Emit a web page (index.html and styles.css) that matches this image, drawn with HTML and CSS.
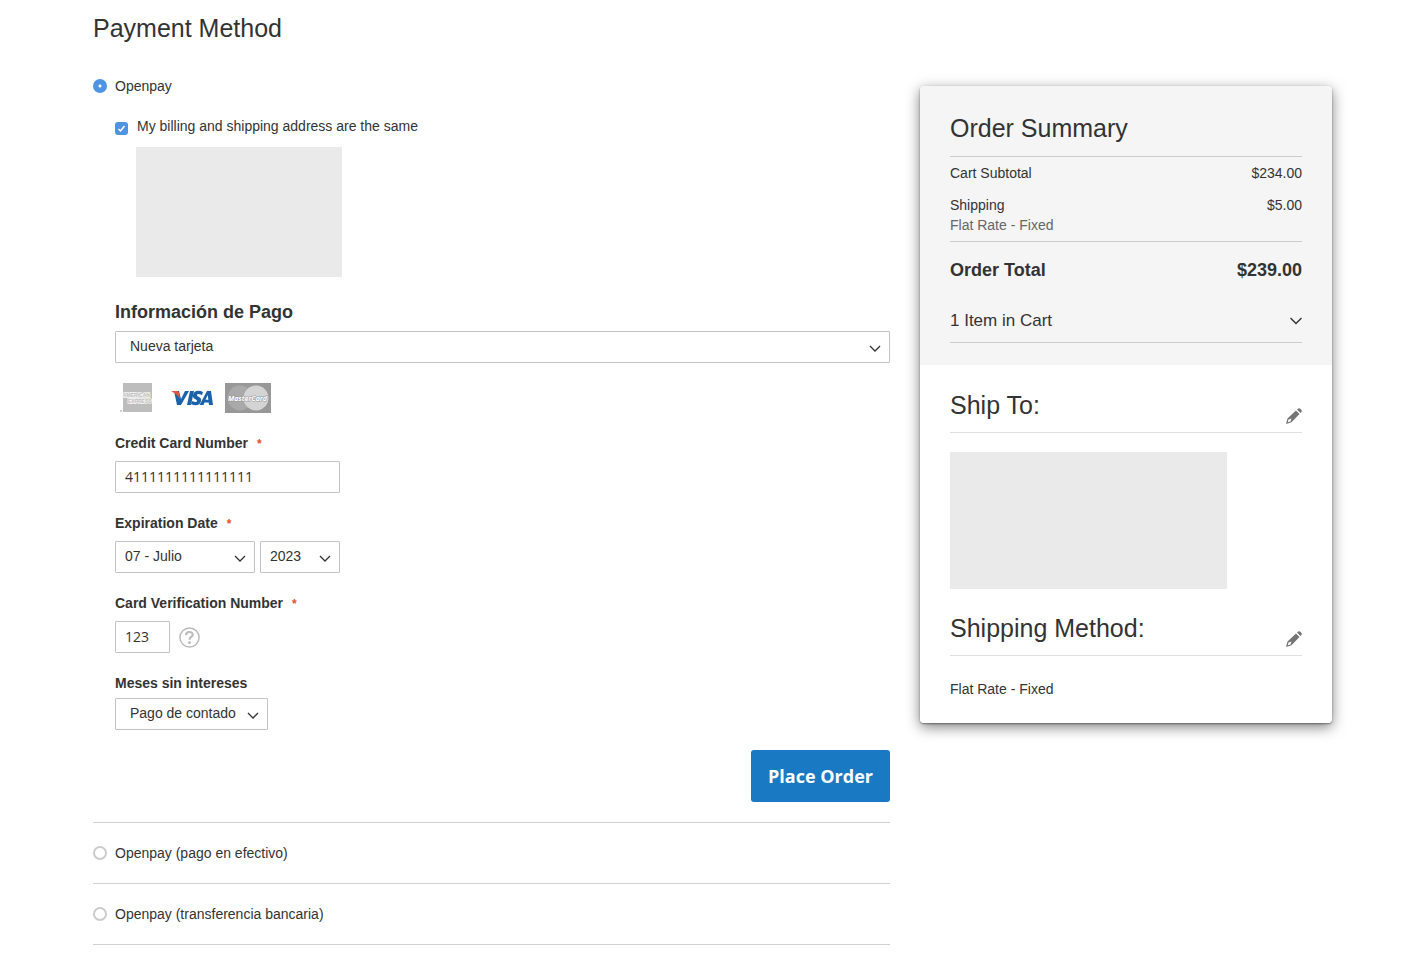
FILE: index.html
```html
<!DOCTYPE html>
<html lang="es">
<head>
<meta charset="utf-8">
<meta name="viewport" content="width=device-width, initial-scale=1">
<title>Payment Method</title>
<link rel="stylesheet" href="styles.css">
</head>
<body>
<div class="checkout">
  <main class="payment">
    <h1 class="title">Payment Method</h1>
    <form class="methods">
      <section class="method method-active">
        <label class="option"><input class="radio" type="radio" name="method" checked>Openpay</label>
        <div class="details">
          <label class="same-address"><input class="checkbox" type="checkbox" checked>My billing and shipping address are the same</label>
          <div class="billing-address"></div>
          <h2 class="legend"><label for="card">Información de Pago</label></h2>
          <select class="control select select-card" id="card"><option>Nueva tarjeta</option></select>
          <div class="brands">
            <svg class="brand" width="34" height="30" viewBox="0 0 34 30" role="img" aria-label="American Express">
              <rect x="4" width="29" height="29" fill="#bdbdbd"/>
              <rect x="1" y="27" width="2" height="2" fill="#d0d0d0"/>
              <g font-family="Liberation Sans" font-weight="700" font-size="5" fill="#bdbdbd" stroke="#f4f4f4" stroke-width="1.500" paint-order="stroke">
                <text x="4" y="14">AMERICAN</text><text x="9" y="20">EXPRESS</text>
              </g>
            </svg>
            <svg class="brand" width="42" height="16" viewBox="0 0 42 16" role="img" aria-label="Visa">
              <path d="M3 1H8L10 9 14 1H18L10 15H6Z" fill="#1a62a9"/>
              <path d="M0 1H6Q8 1 8 4L9 9Q6 4 0 1Z" fill="#e6553a"/>
              <path d="M19 1H23L20 15H16Z" fill="#1a62a9"/>
              <path d="M32 2L31 5Q26 3 26 5C26 7 31 7 30 11C29 16 24 16 20 14L21 11Q26 13 26 11C26 9 21 9 22 5C23 0 28 0 32 2Z" fill="#1a62a9"/>
              <path d="M36 1H40L42 15H38L37.700 12.500H33.500L32.500 15H28.500ZM36.700 5L34.500 9.700H37.400Z" fill="#1a62a9" fill-rule="evenodd"/>
            </svg>
            <svg class="brand" width="46" height="30" viewBox="0 0 46 30" role="img" aria-label="MasterCard">
              <rect width="46" height="30" fill="#989898"/>
              <circle cx="15" cy="15" r="12.500" fill="#a9a9a9"/>
              <circle cx="31" cy="15" r="12.500" fill="#d4d4d4"/>
              <text x="3" y="18" font-family="Open Sans" font-weight="700" font-style="italic" font-size="7" fill="#fff" stroke="#999" stroke-width="1" paint-order="stroke">MasterCard</text>
            </svg>
          </div>
          <div class="field">
            <label class="label required" for="number">Credit Card Number</label>
            <input class="control text-number" id="number" type="text" value="4111111111111111">
          </div>
          <div class="field">
            <label class="label required" for="month">Expiration Date</label>
            <div class="row">
              <select class="control select select-month" id="month"><option>07 - Julio</option></select>
              <select class="control select select-year" aria-label="Year"><option>2023</option></select>
            </div>
          </div>
          <div class="field">
            <label class="label required" for="cvv">Card Verification Number</label>
            <div class="row row-cvv">
              <input class="control text-cvv" id="cvv" type="text" value="123">
              <button class="icon-button" type="button" aria-label="Help">
                <svg width="21" height="21" viewBox="0 0 22 22" fill="none" stroke="#bbb"><circle cx="11" cy="11" r="10" stroke-width="1.600"/><path d="M7.300 8.500C7.600 4 14.700 4.200 14.400 8.300C14.200 10.500 11 10.500 11 13.300" stroke-width="2.200"/><circle cx="11" cy="16.500" r="1.500" fill="#bbb" stroke="none"/></svg>
              </button>
            </div>
          </div>
          <div class="field field-months">
            <label class="label" for="months">Meses sin intereses</label>
            <select class="control select select-months" id="months"><option>Pago de contado</option></select>
          </div>
          <div class="actions"><button class="place-order" type="submit">Place Order</button></div>
        </div>
      </section>
      <section class="method"><label class="option"><input class="radio" type="radio" name="method">Openpay (pago en efectivo)</label></section>
      <section class="method"><label class="option"><input class="radio" type="radio" name="method">Openpay (transferencia bancaria)</label></section>
    </form>
  </main>
  <aside class="sidebar">
    <section class="summary">
      <h2 class="title summary-title">Order Summary</h2>
      <table class="totals">
        <tbody>
          <tr><th scope="row">Cart Subtotal</th><td>$234.00</td></tr>
          <tr class="shipping"><th scope="row">Shipping<span class="rate">Flat Rate - Fixed</span></th><td>$5.00</td></tr>
        </tbody>
        <tfoot>
          <tr><th scope="row">Order Total</th><td>$239.00</td></tr>
        </tfoot>
      </table>
      <button class="cart-toggle" type="button" aria-expanded="false">1 Item in Cart
        <svg width="12" height="8" viewBox="0 0 12 8" fill="none" stroke="#333" stroke-width="1.400"><path d="M.500 1L6 6.500 11.500 1"/></svg>
      </button>
    </section>
    <section class="shipping-info">
      <div class="info-head">
        <h2 class="title">Ship To:</h2>
        <button class="icon-button" type="button" aria-label="Edit address">
          <svg width="16" height="16" viewBox="0 0 16 16"><path d="M0 16L1.500 10.500 10 2.500 13.500 6 5.500 14.200ZM2.500 11.500L1.800 14.200 4.500 13.500 5.500 10.500Z" fill="#757575" fill-rule="evenodd"/><path d="M11 1.600L12.200 .500Q13 0 14 .500L15.500 2Q16 3 15.500 4L14.400 5.100Z" fill="#757575"/></svg>
        </button>
      </div>
      <div class="ship-address"></div>
      <div class="info-head">
        <h2 class="title">Shipping Method:</h2>
        <button class="icon-button" type="button" aria-label="Edit shipping method">
          <svg width="16" height="16" viewBox="0 0 16 16"><path d="M0 16L1.500 10.500 10 2.500 13.500 6 5.500 14.200ZM2.500 11.500L1.800 14.200 4.500 13.500 5.500 10.500Z" fill="#757575" fill-rule="evenodd"/><path d="M11 1.600L12.200 .500Q13 0 14 .500L15.500 2Q16 3 15.500 4L14.400 5.100Z" fill="#757575"/></svg>
        </button>
      </div>
      <p class="method-name">Flat Rate - Fixed</p>
    </section>
  </aside>
</div>
</body>
</html>
```
FILE: styles.css
```css
* { box-sizing: border-box; }
body {
  margin: 0;
  background: #fff;
  color: #333;
  font: 14px/20px "Liberation Sans", Arial, sans-serif;
}
h1, h2, p { margin: 0; }
button { font: inherit; color: inherit; cursor: pointer; }
.checkout {
  display: flex;
  align-items: flex-start;
  gap: 30px;
  padding: 14px 88px 14px 93px;
}
.payment { flex: 1; min-width: 0; }
.title { font-size: 25px; line-height: 28px; font-weight: 300; }
.method { padding: 20px 0; border-bottom: 1px solid #d1d1d1; }
.method-active { padding-top: 34px; }
.option { display: flex; align-items: center; gap: 8px; }
.radio, .checkbox { appearance: none; flex: none; margin: 0; }
.radio {
  width: 14px;
  height: 14px;
  border: 2px solid #ccc;
  border-radius: 50%;
  background: #fff;
}
.radio:checked { border: 0; background: radial-gradient(circle, #fff 1px, #4f93e3 2px); }
.details { padding: 20px 0 0 22px; }
.same-address { display: flex; align-items: center; gap: 9px; }
.checkbox {
  width: 13px;
  height: 13px;
  margin-top: 4px;
  border-radius: 3px;
  background: #4f93e3 url("data:image/svg+xml,%3Csvg xmlns='http://www.w3.org/2000/svg' width='13' height='13' fill='none' stroke='white' stroke-width='1.5'%3E%3Cpath d='M3.500 7L5.500 9 9.500 4'/%3E%3C/svg%3E");
}
.billing-address { width: 206px; height: 130px; margin: 11px 0 25px 21px; background: #eaeaea; }
.legend { margin-bottom: 9px; font-size: 18px; line-height: 20px; }
.control {
  display: block;
  height: 32px;
  border: 1px solid #c2c2c2;
  border-radius: 1px;
  padding: 0 9px 2px;
  background: #fff;
  color: #333;
  font: 14px/20px "Open Sans", sans-serif;
}
.select {
  appearance: none;
  font-family: "Liberation Sans", Arial, sans-serif;
  background: #fff url("data:image/svg+xml,%3Csvg xmlns='http://www.w3.org/2000/svg' width='12' height='8' fill='none' stroke='%23333' stroke-width='1.3'%3E%3Cpath d='M1 1L6 6 11 1'/%3E%3C/svg%3E") no-repeat right 8px top 13px;
}
.select-card { width: 100%; padding-left: 14px; }
.brands { display: flex; align-items: center; height: 30px; margin: 20px 0; padding-left: 4px; }
.brand + .brand { margin-left: 12px; }
.brand:nth-child(2) { margin-left: 18px; }
.field { margin-bottom: 20px; }
.label { display: block; margin-bottom: 8px; font-weight: 700; }
.required::after { content: "*"; margin-left: 9px; color: #e5512d; font-size: 12px; line-height: 1; }
.text-number { width: 225px; }
.row { display: flex; align-items: center; gap: 5px; }
.row-cvv { gap: 9px; }
.select-month { width: 140px; }
.select-year { width: 80px; }
.text-cvv { width: 55px; }
.icon-button { display: flex; padding: 0; border: 0; background: none; }
.field-months .label { margin-bottom: 5px; }
.select-months { width: 153px; padding-left: 14px; }
.actions { display: flex; justify-content: flex-end; }
.place-order {
  padding: 14px 17px;
  border: 0;
  border-radius: 3px;
  background: #1979c3;
  color: #fff;
  font: 700 18px/24px "Open Sans", sans-serif;
}
.sidebar {
  flex: 0 0 412px;
  margin-top: 72px;
  border-radius: 4px;
  overflow: hidden;
  box-shadow: 0 4px 14px rgba(0, 0, 0, .5), 0 1px 2px rgba(0, 0, 0, .4);
}
.summary { padding: 28px 30px 22px; background: #f5f5f5; }
.summary-title { padding-bottom: 14px; border-bottom: 1px solid #ccc; }
.totals { width: 100%; border-collapse: collapse; }
.totals th, .totals td { padding: 6px 0; font-weight: 400; text-align: left; vertical-align: top; }
.totals td { text-align: right; }
.rate { display: block; color: #666; }
.totals tfoot { border-top: 1px solid #ccc; }
.totals tfoot th, .totals tfoot td { padding: 18px 0; font-size: 18px; font-weight: 700; }
.cart-toggle {
  display: flex;
  width: 100%;
  align-items: center;
  justify-content: space-between;
  padding: 13px 0 11px;
  border: 0;
  border-bottom: 1px solid #ccc;
  background: none;
  font-size: 17px;
  font-weight: 300;
}
.shipping-info { padding: 26px 30px 24px; background: #fff; }
.info-head {
  display: flex;
  align-items: flex-end;
  justify-content: space-between;
  padding-bottom: 8px;
  border-bottom: 1px solid #e0e0e0;
}
.info-head .title { padding-bottom: 5px; }
.ship-address { width: 277px; max-width: 100%; height: 137px; margin: 19px 0 25px; background: #eaeaea; }
.method-name { margin-top: 23px; }
```
